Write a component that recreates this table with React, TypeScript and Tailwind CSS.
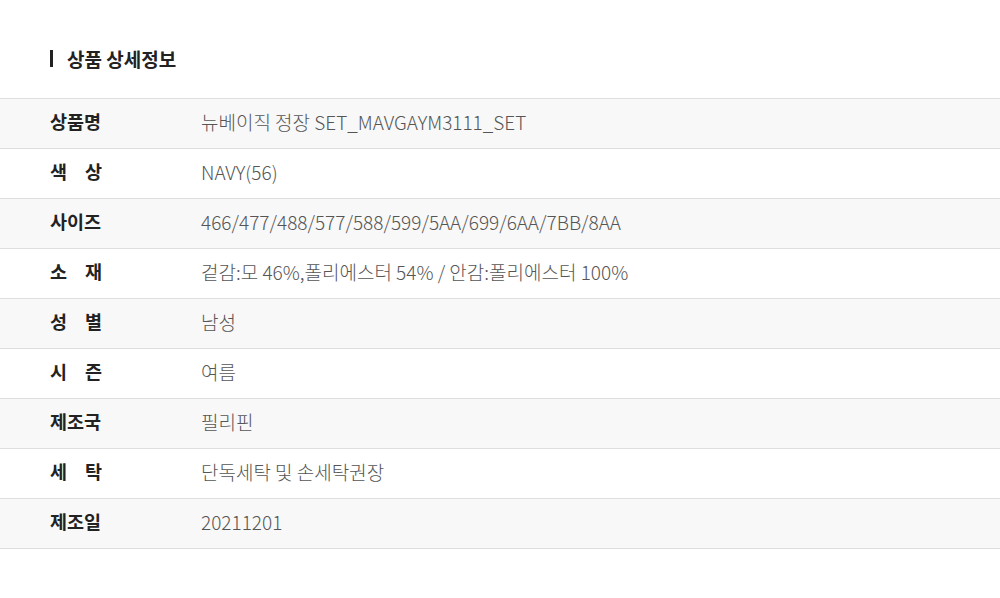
const rows: { label: string; value: string; spaced?: boolean }[] = [
  { label: "상품명", value: "뉴베이직 정장 SET_MAVGAYM3111_SET" },
  { label: "색상", value: "NAVY(56)", spaced: true },
  { label: "사이즈", value: "466/477/488/577/588/599/5AA/699/6AA/7BB/8AA" },
  { label: "소재", value: "겉감:모 46%,폴리에스터 54% / 안감:폴리에스터 100%", spaced: true },
  { label: "성별", value: "남성", spaced: true },
  { label: "시즌", value: "여름", spaced: true },
  { label: "제조국", value: "필리핀" },
  { label: "세탁", value: "단독세탁 및 손세탁권장", spaced: true },
  { label: "제조일", value: "20211201" },
];

export default function App() {
  return (
    <div
      className="w-[1000px] h-[598px] bg-white"
      style={{ fontFamily: '"Noto Sans CJK KR", "Noto Sans", sans-serif' }}
    >
      <div className="pt-[46px] pl-[50px] flex items-center h-[98px] pb-[28px]">
        <span className="w-[3px] h-[17px] bg-[#222]" />
        <h2 className="ml-[14px] text-[19px] font-bold text-[#222] leading-none">
          상품 상세정보
        </h2>
      </div>

      <div className="border-t border-[#dedede]">
        {rows.map((r, i) => (
          <div
            key={r.label}
            className={
              "flex items-center h-[50px] pb-[3px] border-b border-[#dedede] " +
              (i % 2 === 0 ? "bg-[#f8f8f8]" : "bg-white")
            }
          >
            <div className="w-[201px] pl-[50px] shrink-0">
              {r.spaced ? (
                <div className="w-[52px] flex justify-between text-[18.5px] font-bold text-[#222]">
                  {r.label.split("").map((c, k) => (
                    <span key={k}>{c}</span>
                  ))}
                </div>
              ) : (
                <span className="text-[18.5px] font-bold text-[#222]">{r.label}</span>
              )}
            </div>
            <div className="text-[19px] font-light text-[#555]">{r.value}</div>
          </div>
        ))}
      </div>
    </div>
  );
}
